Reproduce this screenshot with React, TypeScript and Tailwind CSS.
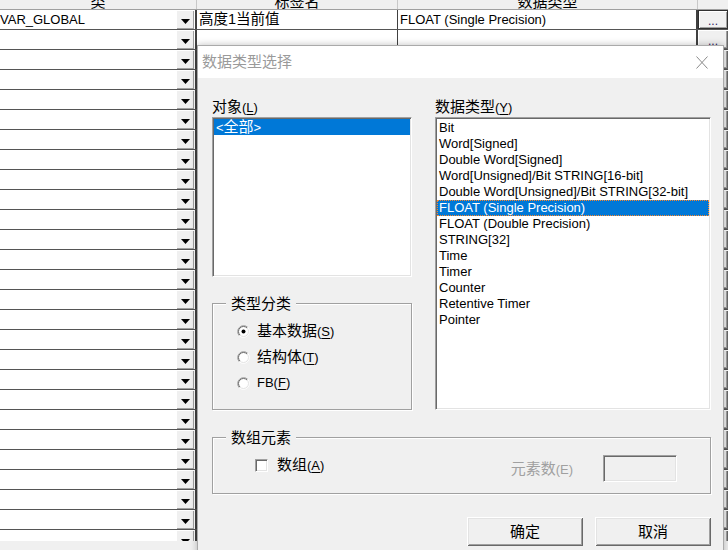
import React from "react";

const SUNKEN =
  "border border-t-[#a0a0a0] border-l-[#a0a0a0] border-r-white border-b-white shadow-[inset_1px_1px_0_#696969,inset_-1px_-1px_0_#e3e3e3]";
const ETCHED = "border border-[#a0a0a0] shadow-[inset_1px_1px_0_#fff,1px_1px_0_#fff]";
const RAISED =
  "bg-[#f0f0f0] shadow-[inset_1px_1px_0_#fff,inset_-1px_-1px_0_#696969,inset_2px_2px_0_#e3e3e3,inset_-2px_-2px_0_#a0a0a0]";

function DropBtn() {
  return (
    <div className="w-[18px] h-full bg-[#f0f0f0] flex items-center justify-center pt-[3px] shadow-[inset_1px_1px_0_#fff,inset_-1px_-1px_0_#a0a0a0]">
      <svg width="9" height="5" viewBox="0 0 9 5">
        <path d="M0 0H9L4.5 5Z" fill="#000" />
      </svg>
    </div>
  );
}

function DotsBtn({ focused }: { focused?: boolean }) {
  return (
    <div
      className={
        focused
          ? "h-full border border-[#303030] bg-[#f0f0f0] shadow-[inset_1px_1px_0_#fff,inset_-1px_-1px_0_#a0a0a0] flex items-end justify-center pb-[1px] text-[12px] leading-[12px] text-[#302060]"
          : "h-full bg-[#f0f0f0] shadow-[inset_1px_1px_0_#fff,inset_-1px_-1px_0_#696969,inset_-2px_-2px_0_#a0a0a0] flex items-end justify-center pb-[2px] text-[12px] leading-[12px] text-[#302060]"
      }
    >
      ...
    </div>
  );
}

function Radio({ checked }: { checked?: boolean }) {
  return (
    <svg width="13" height="13" viewBox="0 0 13 13" className="shrink-0">
      <circle cx="6.5" cy="6.5" r="5.5" fill="#fff" />
      <path d="M2.26 10.74A6 6 0 0 1 10.74 2.26" fill="none" stroke="#a0a0a0" />
      <path d="M2.96 10.04A5 5 0 0 1 10.04 2.96" fill="none" stroke="#696969" />
      <path d="M10.74 2.26A6 6 0 0 1 2.26 10.74" fill="none" stroke="#ffffff" />
      <path d="M10.04 2.96A5 5 0 0 1 2.96 10.04" fill="none" stroke="#e3e3e3" />
      {checked && <circle cx="6.5" cy="6.5" r="2" fill="#000" />}
    </svg>
  );
}

function Mn({ k }: { k: string }) {
  return (
    <span className="text-[13px]">
      (<span className="underline underline-offset-[2px]">{k}</span>)
    </span>
  );
}

const types = [
  "Bit",
  "Word[Signed]",
  "Double Word[Signed]",
  "Word[Unsigned]/Bit STRING[16-bit]",
  "Double Word[Unsigned]/Bit STRING[32-bit]",
  "FLOAT (Single Precision)",
  "FLOAT (Double Precision)",
  "STRING[32]",
  "Time",
  "Timer",
  "Counter",
  "Retentive Timer",
  "Pointer",
];

function Grid() {
  const rows = Array.from({ length: 27 }, (_, i) => i);
  return (
    <div className="h-[541px] overflow-hidden bg-white">
      <div className="flex h-[10px] border-b border-[#a0a0a0] bg-[#f0f0f0] text-[15px] leading-[15px]">
        <div className="w-[197px] border-r border-[#c8c8c8] overflow-hidden flex items-end justify-center">类</div>
        <div className="w-[201px] border-r border-[#c8c8c8] overflow-hidden flex items-end justify-center">标签名</div>
        <div className="w-[300px] border-r border-[#c8c8c8] overflow-hidden flex items-end justify-center">数据类型</div>
        <div className="flex-1" />
      </div>
      {rows.map((i) => (
        <div key={i} className="flex h-[20px] border-b border-[#555555]">
          <div className="w-[197px] flex border-r-2 border-[#404040]">
            <div className="flex-1 text-[13px] leading-[19px] whitespace-nowrap overflow-hidden">
              {i === 0 ? "VAR_GLOBAL" : ""}
            </div>
            <DropBtn />
            <div className="w-[1px]" />
          </div>
          <div className="w-[201px] border-r border-[#404040] pl-[2px] text-[14.5px] leading-[19px] whitespace-nowrap overflow-hidden">
            {i === 0 ? "高度1当前值" : ""}
          </div>
          <div className="w-[300px] border-r-2 border-[#404040] pl-[2px] text-[13px] leading-[19px] whitespace-nowrap overflow-hidden">
            {i === 0 ? "FLOAT (Single Precision)" : ""}
          </div>
          <div className="flex-1">
            <DotsBtn focused={i === 0} />
          </div>
        </div>
      ))}
    </div>
  );
}

function Dialog() {
  return (
    <div className="absolute left-[197px] top-[45px] w-[527px] h-[520px] border border-[#aaaaaa] bg-[#f0f0f0] shadow-[0_0_7px_rgba(0,0,0,0.25)]">
      <div className="h-[32px] bg-white flex items-center pl-[4px] pr-[15px]">
        <span className="text-[15px] leading-[18px] text-[#9a9a9a]">数据类型选择</span>
        <svg width="12" height="13" viewBox="0 0 12 13" className="ml-auto">
          <path d="M0.5 0.5L11.5 12.5M11.5 0.5L0.5 12.5" stroke="#8a8a8a" strokeWidth="1" fill="none" />
        </svg>
      </div>

      <div className="pl-[14px] pr-[12px] pt-[21px] text-[15px]">
        <div className="flex gap-[23px]">
          <div className="w-[200px] flex flex-col">
            <div className="h-[18px] leading-[16px]">
              对象<Mn k="L" />
            </div>
            <div className={"h-[160px] bg-white " + SUNKEN + " pt-[1px] px-[1px]"}>
              <div className="h-[16px] bg-[#0078d7] text-white leading-[16px] pl-[2px] text-[15px]">
                <span className="text-[13px]">&lt;</span>全部<span className="text-[13px]">&gt;</span>
              </div>
            </div>
            <div className={"relative mt-[26px] h-[107px] " + ETCHED}>
              <div className="absolute left-[13px] -top-[9px] px-[5px] bg-[#f0f0f0] leading-[17px]">类型分类</div>
              <div className="pt-[14px] pl-[24px] flex flex-col">
                <div className="h-[26px] flex items-center gap-[7px]">
                  <Radio checked />
                  <span className="leading-[16px]">
                    基本数据<Mn k="S" />
                  </span>
                </div>
                <div className="h-[26px] flex items-center gap-[7px]">
                  <Radio />
                  <span className="leading-[16px]">
                    结构体<Mn k="T" />
                  </span>
                </div>
                <div className="h-[26px] flex items-center gap-[7px]">
                  <Radio />
                  <span className="leading-[16px] text-[13px]">
                    FB(<span className="underline underline-offset-[2px]">F</span>)
                  </span>
                </div>
              </div>
            </div>
          </div>

          <div className="w-[276px] flex flex-col">
            <div className="h-[18px] leading-[16px]">
              数据类型<Mn k="Y" />
            </div>
            <div className={"h-[293px] bg-white " + SUNKEN + " pt-[2px] px-[1px]"}>
              {types.map((t, i) => (
                <div
                  key={t}
                  className={
                    i === 5
                      ? "h-[16px] leading-[16px] pl-[2px] text-[13px] whitespace-nowrap bg-[#0078d7] text-white outline-1 outline-dotted outline-[#ff8728] -outline-offset-1"
                      : "h-[16px] leading-[16px] pl-[2px] text-[13px] whitespace-nowrap"
                  }
                >
                  {t}
                </div>
              ))}
            </div>
          </div>
        </div>

        <div className={"relative mt-[27px] h-[57px] " + ETCHED}>
          <div className="absolute left-[13px] -top-[9px] px-[5px] bg-[#f0f0f0] leading-[17px]">数组元素</div>
          <div className="pt-[17px] flex items-start">
            <div className="ml-[42px] mt-[2px] h-[16px] flex items-center gap-[9px]">
              <div className={"w-[13px] h-[13px] bg-white " + SUNKEN} />
              <span className="leading-[16px]">
                数组<Mn k="A" />
              </span>
            </div>
            <div className="ml-auto mt-[6px] leading-[16px] text-[#a0a0a0]">
              元素数<span className="text-[13px]">(E)</span>
            </div>
            <div className={"ml-[30px] mr-[33px] w-[74px] h-[27px] bg-[#f0f0f0] " + SUNKEN} />
          </div>
        </div>

        <div className="mt-[23px] flex justify-end gap-[12px]">
          <div className={"w-[116px] h-[29px] flex items-center justify-center leading-[16px] " + RAISED}>确定</div>
          <div className={"w-[116px] h-[29px] flex items-center justify-center leading-[16px] " + RAISED}>取消</div>
        </div>
      </div>
    </div>
  );
}

export default function App() {
  return (
    <div className="relative w-[728px] h-[550px] overflow-hidden bg-[#f0f0f0] text-black font-['Liberation_Sans','Noto_Sans_CJK_SC',sans-serif]">
      <Grid />
      <Dialog />
    </div>
  );
}
